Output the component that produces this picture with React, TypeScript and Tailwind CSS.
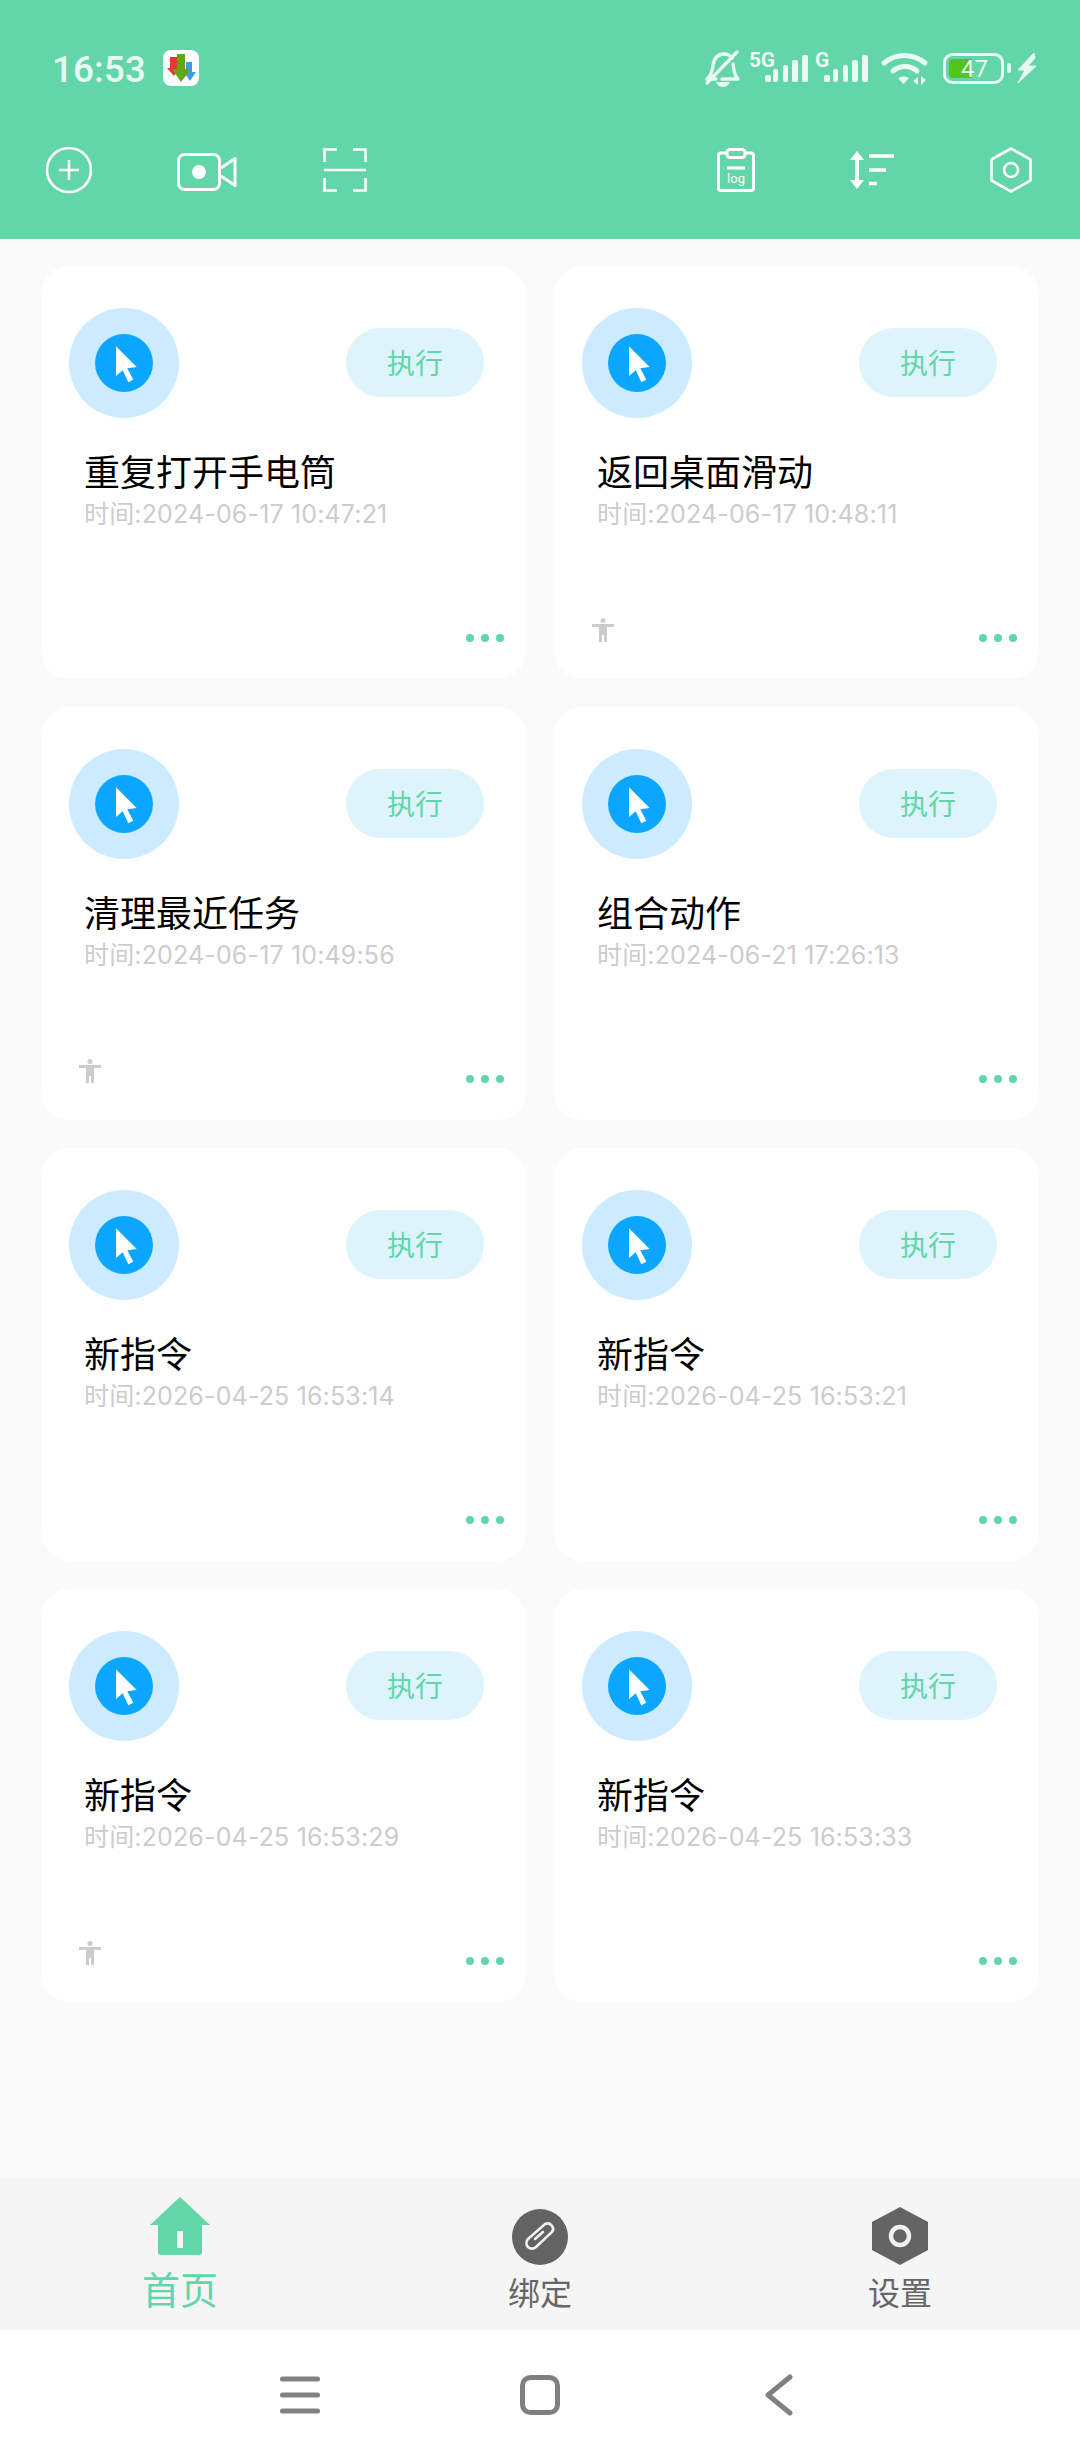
import React from "react";

const cjk = "font-['Roboto','Noto_Sans_CJK_SC',sans-serif]";

type Item = { title: string; time: string; person?: boolean };
const items: Item[] = [
  { title: "重复打开手电筒", time: "2024-06-17 10:47:21" },
  { title: "返回桌面滑动", time: "2024-06-17 10:48:11", person: true },
  { title: "清理最近任务", time: "2024-06-17 10:49:56", person: true },
  { title: "组合动作", time: "2024-06-21 17:26:13" },
  { title: "新指令", time: "2026-04-25 16:53:14" },
  { title: "新指令", time: "2026-04-25 16:53:21" },
  { title: "新指令", time: "2026-04-25 16:53:29", person: true },
  { title: "新指令", time: "2026-04-25 16:53:33" },
];

function Person() {
  return (
    <svg width="22" height="24" viewBox="0 0 22 24" fill="#cccccc">
      <circle cx="11" cy="2.5" r="2.5" />
      <path d="M0 6h22v3h-7v15h-3v-7h-2v7H7V9H0z" />
    </svg>
  );
}

function Card({ item }: { item: Item }) {
  return (
    <div className="h-[413px] rounded-[28px] bg-white flex flex-col">
      <div className="flex items-center justify-between pl-[28px] pr-[42px] pt-[42px]">
        <div className="w-[110px] h-[110px] rounded-full bg-[#cdebff] flex items-center justify-center">
          <svg width="58" height="58" viewBox="0 0 58 58">
            <circle cx="29" cy="29" r="29" fill="#0ba6ff" />
            <path d="M21 12.3 41.7 33 32.3 34.3 38.3 45.7 33.3 48.3 27.7 36.3 21 42z" fill="#ffffff" />
          </svg>
        </div>
        <div className="w-[138px] h-[69px] -mt-[1px] pt-[4px] rounded-full bg-[#def4fd] flex items-center justify-center text-[28px] text-[#62d6a9]">
          执行
        </div>
      </div>
      <div className="pl-[43px] mt-[31px] text-[36px] leading-[50px] text-black">{item.title}</div>
      <div className="pl-[43px] font-['Inter','Noto_Sans_CJK_SC',sans-serif] text-[25px] tracking-[0.15px] leading-[30px] text-[#cccccc]">时间:{item.time}</div>
      <div className="mt-auto flex items-end justify-between pl-[38px] pr-[22px] pb-[37px]">
        <div className="h-[24px]">{item.person && <Person />}</div>
        <div className="flex gap-[7px]">
          <span className="w-[8px] h-[8px] rounded-full bg-[#62d6a9]" />
          <span className="w-[8px] h-[8px] rounded-full bg-[#62d6a9]" />
          <span className="w-[8px] h-[8px] rounded-full bg-[#62d6a9]" />
        </div>
      </div>
    </div>
  );
}

function StatusIcons() {
  const c = "#e8faf3";
  const bars = (x: number[]) => {
    const tops = [75, 69, 65, 60, 55];
    const ws = [6, 5, 5, 6, 6];
    return x.map((v, i) => <rect key={i} x={v} y={tops[i]} width={ws[i]} height={82 - tops[i]} rx="2" fill={c} />);
  };
  return (
    <svg width="340" height="50" viewBox="700 45 340 50" className="block">
      {/* muted bell */}
      <path d="M716 79h-9c4-3 5-7 6-13 1-8 5-12 11-12 3 0 6 1 8 4M733 64c1 6 1 11 5 15h-16" fill="none" stroke={c} strokeWidth="3.400" strokeLinecap="round" strokeLinejoin="round" />
      <path d="M716 82h14c-1 3-4 5-7 5s-6-2-7-5z" fill={c} />
      <path d="M707 83 737 52" stroke={c} strokeWidth="3.400" strokeLinecap="round" />
      <text x="749" y="67" fontFamily="Roboto" fontWeight="700" fontSize="21" textLength="26" fill={c}>5G</text>
      {bars([765, 773, 783, 792, 802])}
      <text x="815" y="67" fontFamily="Roboto" fontWeight="700" fontSize="21" fill={c}>G</text>
      {bars([824, 833, 843, 852, 862])}
      {/* wifi */}
      <path d="M884 63c12-10 29-10 41 0" fill="none" stroke={c} strokeWidth="5" strokeLinecap="round" />
      <path d="M893 71c7-6 17-6 24 0" fill="none" stroke={c} strokeWidth="5" strokeLinecap="round" />
      <path d="M898 78c4-2 7-2 11 0l-5.500 6z" fill={c} />
      <path d="M918 77v8l-5-4zM921 85v-9l5 4z" fill={c} />
      {/* battery */}
      <rect x="944.500" y="54.500" width="58" height="28" rx="8" fill="none" stroke={c} strokeWidth="3" />
      <path d="M953 59h19v19h-19a4 4 0 0 1-4-4V63a4 4 0 0 1 4-4z" fill="#52c41a" />
      <rect x="1007" y="63" width="4" height="10" rx="2" fill={c} />
      <text x="961" y="77" fontFamily="Roboto" fontSize="24" fill={c}>47</text>
      <path d="M1034 53 1018 70h7l-7 13 18-17h-8l7-8z" fill={c} stroke={c} strokeWidth="1" />
    </svg>
  );
}

function Toolbar() {
  const s = { fill: "none", stroke: "#ffffff", strokeWidth: 2.6 } as const;
  return (
    <div className="flex items-center justify-between h-[50px] mt-[16px] pl-[46px] pr-[48px]">
      <div className="flex items-center">
        <svg width="46" height="48" viewBox="0 0 46 48">
          <circle cx="23" cy="24" r="22" {...s} />
          <path d="M23 14v20M13 24h20" {...s} />
        </svg>
        <svg width="60" height="38" viewBox="0 0 60 38" className="ml-[85px] mt-[4px]">
          <rect x="1.5" y="1.5" width="41" height="35" rx="6" {...s} strokeWidth="3" />
          <circle cx="22" cy="19" r="7" fill="#ffffff" />
          <path d="M44 15 58 5.5v27L44 23" {...s} strokeWidth="3" strokeLinejoin="round" />
        </svg>
        <svg width="44" height="44" viewBox="0 0 44 44" className="ml-[86px]">
          <path d="M14 1.5H1.5V14M30 1.5H42.5V14M1.5 30V42.5H14M42.5 30V42.5H30M1 22H43" {...s} />
        </svg>
      </div>
      <div className="flex items-center">
        <svg width="38" height="44" viewBox="0 0 38 44">
          <rect x="1.5" y="5" width="35" height="37.5" rx="2.5" {...s} strokeWidth="3" />
          <rect x="10" y="1.5" width="18" height="8" rx="3" {...s} fill="#62d6a9" strokeWidth="3" />
          <path d="M10 20h18" {...s} strokeWidth="3" />
          <text x="19" y="35" textAnchor="middle" fontFamily="Roboto" fontSize="13" fill="#ffffff">log</text>
        </svg>
        <svg width="44" height="38" viewBox="0 0 44 38" className="ml-[95px]">
          <path d="M7 0 14 9H9v20h5l-7 9-7-9h5V9H0z" fill="#ffffff" />
          <path d="M19 5h25M19 19h17M19 32.500h8" {...s} strokeWidth="3.600" />
        </svg>
        <svg width="42" height="46" viewBox="0 0 42 46" className="ml-[96px]">
          <path d="M21 1.500 40.500 12.500V33.500L21 44.500 1.500 33.500V12.500z" {...s} strokeLinejoin="round" />
          <circle cx="21" cy="23" r="7" {...s} />
        </svg>
      </div>
    </div>
  );
}

export default function App() {
  return (
    <div className={`w-[1080px] h-[2460px] flex flex-col bg-[#fafafa] ${cjk}`}>
      <header className="h-[239px] bg-[#62d6a9] shrink-0">
        <div className="flex items-center justify-between h-[50px] pl-[52px] pr-[40px] translate-y-[45px]">
          <div className="flex items-center">
            <span className="text-[37px] leading-[50px] font-medium text-[#e8faf3]">16:53</span>
            <svg width="36" height="36" viewBox="0 0 36 36" className="ml-[17px] mb-[4px]">
              <rect width="36" height="36" rx="8" fill="#ffffff" />
              <path d="M7 7h7v11h3L11 26 4 18h3z" fill="#e03a34" />
              <path d="M23 12h6v10h4l-6 9-6-9h2z" fill="#3f9bee" />
              <path d="M14 4h8v15h6L18 32 9 19h5z" fill="#62a515" />
            </svg>
          </div>
          <StatusIcons />
        </div>
        <div className="pt-[79px]">
          <Toolbar />
        </div>
      </header>

      <main className="flex-1 grid grid-cols-2 gap-x-[28px] gap-y-[28px] content-start px-[41px] pt-[27px]">
        {items.map((it, i) => (
          <Card key={i} item={it} />
        ))}
      </main>

      <nav className="h-[152px] bg-[#f5f5f5] grid grid-cols-3 shrink-0">
        <div className="flex flex-col items-center pt-[19px]">
          <svg width="60" height="58" viewBox="0 0 60 58">
            <path d="M30 0 60 28H52V55a3 3 0 0 1-3 3H11a3 3 0 0 1-3-3V28H0z" fill="#62d6a9" />
            <rect x="27" y="34" width="6" height="17" fill="#f5f5f5" />
          </svg>
          <span className="text-[38px] leading-[44px] mt-[14px] text-[#62d6a9]">首页</span>
        </div>
        <div className="flex flex-col items-center pt-[31px]">
          <svg width="56" height="56" viewBox="0 0 56 56">
            <circle cx="28" cy="28" r="28" fill="#636363" />
            <path d="M24 38 40 23A5.500 5.500 0 0 0 33 15L16 30A5.500 5.500 0 0 0 24 38zM23 30 31 23" fill="none" stroke="#f0f0f0" strokeWidth="2.600" strokeLinecap="round" />
          </svg>
          <span className="text-[32px] leading-[40px] mt-[9px] text-[#666666]">绑定</span>
        </div>
        <div className="flex flex-col items-center pt-[29px]">
          <svg width="56" height="58" viewBox="0 0 56 58">
            <path d="M28 0 56 15V43L28 58 0 43V15z" fill="#636363" strokeLinejoin="round" />
            <circle cx="28" cy="29" r="9" fill="none" stroke="#f0f0f0" strokeWidth="4.500" />
          </svg>
          <span className="text-[32px] leading-[40px] mt-[9px] text-[#666666]">设置</span>
        </div>
      </nav>

      <div className="h-[130px] bg-white shrink-0 flex items-center pl-[280px]">
        <svg width="40" height="38" viewBox="0 0 40 38">
          <path d="M2.500 3h35M2.500 19h35M2.500 35h35" stroke="#808080" strokeWidth="5" strokeLinecap="round" />
        </svg>
        <svg width="40" height="40" viewBox="0 0 40 40" className="ml-[200px]">
          <rect x="2.500" y="2.500" width="35" height="35" rx="8" fill="none" stroke="#808080" strokeWidth="5" />
        </svg>
        <svg width="28" height="42" viewBox="0 0 28 42" className="ml-[205px]">
          <path d="M25 3 3 21l22 18" fill="none" stroke="#808080" strokeWidth="5" strokeLinecap="round" strokeLinejoin="round" />
        </svg>
      </div>
    </div>
  );
}
